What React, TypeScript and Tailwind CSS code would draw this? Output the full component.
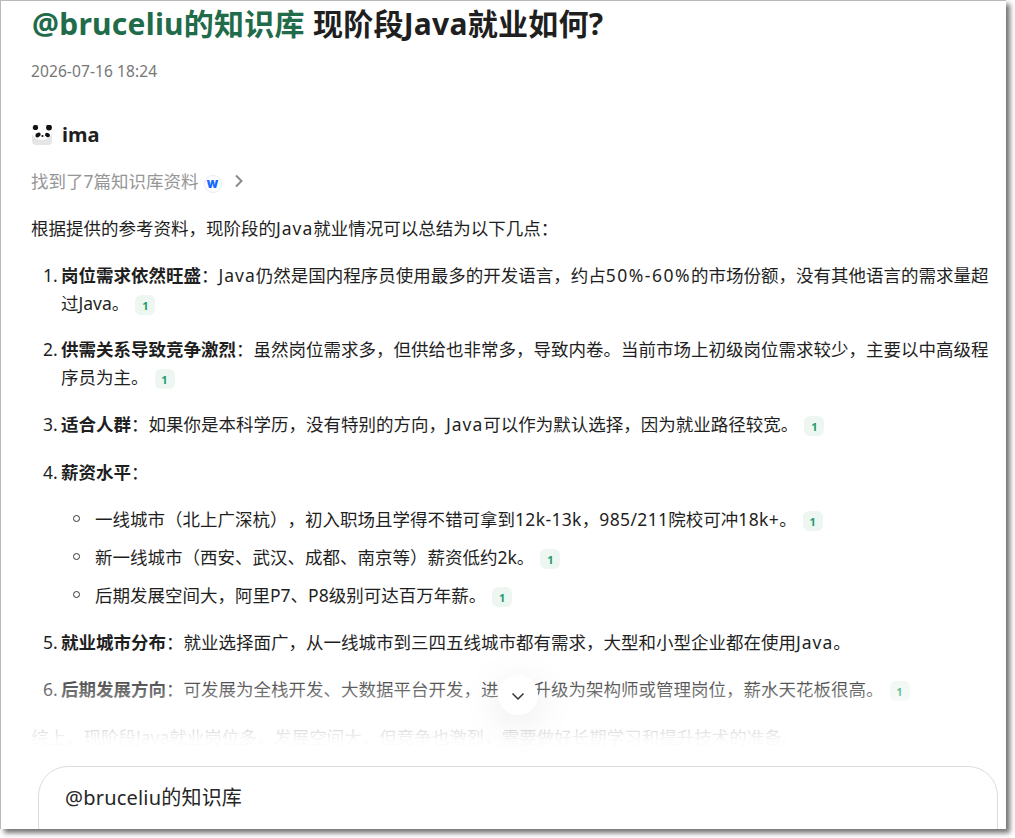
import React from 'react'

const Ref = () => (
  <span className="ml-[6px] inline-flex h-[20px] w-[20px] items-center justify-center rounded-[6px] bg-[#edf6f1] align-middle text-[11px] font-bold leading-none text-[#1f9d6b]">
    1
  </span>
)

const Java = () => <span className="tracking-[1px]">Java</span>

const Num = ({ children }: { children: React.ReactNode }) => (
  <span className="tracking-[0.35px]">{children}</span>
)

const Panda = () => (
  <svg width="20" height="20" viewBox="0 0 20 20" className="shrink-0">
    <rect x="0" y="0" width="20" height="20" rx="4" fill="#e6e6e6" />
    <ellipse cx="10" cy="7.5" rx="10" ry="7.5" fill="#fff" />
    <circle cx="3.5" cy="2.5" r="2.6" fill="#111" />
    <circle cx="17" cy="2.5" r="2.9" fill="#111" />
    <ellipse cx="6" cy="10" rx="2.8" ry="2.1" fill="#111" transform="rotate(-30 6 10)" />
    <ellipse cx="15.5" cy="10" rx="2.6" ry="2.1" fill="#111" transform="rotate(30 15.5 10)" />
    <ellipse cx="10.5" cy="11" rx="1.1" ry="0.9" fill="#111" />
  </svg>
)

const WordIcon = () => (
  <span className="inline-flex h-[18px] w-[18px] items-center justify-center rounded-full border border-[#e8ecf5] bg-white font-['Inter',sans-serif] text-[11px] font-black leading-none text-[#1668ff]">
    W
  </span>
)

const Bullet = () => (
  <span className="ml-[12px] mr-[15px] mt-[10px] h-[7px] w-[7px] shrink-0 rounded-full border border-[#333]" />
)

export default function App() {
  return (
    <div className="h-[838px] w-[1015px] overflow-hidden bg-white font-['Noto_Sans','Noto_Sans_CJK_SC',sans-serif] text-[#1f1f1f] [text-spacing-trim:space-all]">
      <div className="relative h-[829px] w-[1006px] overflow-hidden border-l border-t border-[#b9b9b9] bg-white shadow-[4px_4px_5px_rgba(0,0,0,0.55)]">
        <div className="pl-[30px] pr-[12px]">
          <h1 className="mt-[-2px] pl-[1px] text-[30px] font-bold leading-[50px] tracking-[0.25px]">
            <span className="text-[#1f6b4a]">@bruceliu的知识库</span> 现阶段Java就业如何?
          </h1>
          <p className="mt-[10px] text-[15.5px] leading-[24px] tracking-[0.1px] text-[#777]">2026-07-16 18:24</p>

          <div className="mt-[39px] flex h-[26px] items-center gap-[10px] pl-[1px] text-[20px] font-bold">
            <Panda />
            <span>ima</span>
          </div>

          <div className="mt-[20px] flex h-[26px] items-center text-[17.5px] text-[#969696]">
            <span>找到了7篇知识库资料</span>
            <span className="ml-[5px]"><WordIcon /></span>
            <svg width="12" height="14" viewBox="0 0 12 14" className="ml-[11px]" fill="none" stroke="#8a8a8a" strokeWidth="2">
              <path d="M3 1.5 8.5 7 3 12.5" />
            </svg>
          </div>

          <p className="mt-[20px] text-[17.5px] leading-[28px]">根据提供的参考资料，现阶段的<Java />就业情况可以总结为以下几点：</p>

          <ol className="mt-[19px] text-[17.5px] leading-[28px]">
            <li className="flex">
              <span className="w-[30px] shrink-0 pl-[12px]">1.</span>
              <span><b>岗位需求依然旺盛</b>：<Java />仍然是国内程序员使用最多的开发语言，约占<span className="tracking-[1.5px]">50%-60%</span>的市场份额，没有其他语言的需求量超过Java。<Ref /></span>
            </li>
            <li className="mt-[18px] flex">
              <span className="w-[30px] shrink-0 pl-[12px]">2.</span>
              <span><b>供需关系导致竞争激烈</b>：虽然岗位需求多，但供给也非常多，导致内卷。当前市场上初级岗位需求较少，主要以中高级程序员为主。<Ref /></span>
            </li>
            <li className="mt-[19px] flex">
              <span className="w-[30px] shrink-0 pl-[12px]">3.</span>
              <span><b>适合人群</b>：如果你是本科学历，没有特别的方向，<Java />可以作为默认选择，因为就业路径较宽。<Ref /></span>
            </li>
            <li className="mt-[20px] flex">
              <span className="w-[30px] shrink-0 pl-[12px]">4.</span>
              <div className="flex-1">
                <p><b>薪资水平</b>：</p>
                <ul className="mt-[19px] flex flex-col gap-[10px]">
                  <li className="flex">
                    <Bullet />
                    <span>一线城市（北上广深杭），初入职场且学得不错可拿到<Num>12k-13k</Num>，<Num>985/211</Num>院校可冲<Num>18k+</Num>。<Ref /></span>
                  </li>
                  <li className="flex">
                    <Bullet />
                    <span>新一线城市（西安、武汉、成都、南京等）薪资低约2k。<Ref /></span>
                  </li>
                  <li className="flex">
                    <Bullet />
                    <span>后期发展空间大，阿里P7、P8级别可达百万年薪。<Ref /></span>
                  </li>
                </ul>
              </div>
            </li>
            <li className="mt-[19px] flex">
              <span className="w-[30px] shrink-0 pl-[12px]">5.</span>
              <span><b>就业城市分布</b>：就业选择面广，从一线城市到三四五线城市都有需求，大型和小型企业都在使用<Java />。</span>
            </li>
            <li className="mt-[19px] flex">
              <span className="w-[30px] shrink-0 pl-[12px]">6.</span>
              <span><b>后期发展方向</b>：可发展为全栈开发、大数据平台开发，进一步升级为架构师或管理岗位，薪水天花板很高。<Ref /></span>
            </li>
          </ol>

          <p className="mt-[20px] text-[17.5px] leading-[28px]">综上，现阶段Java就业岗位多，发展空间大，但竞争也激烈，需要做好长期学习和提升技术的准备。</p>
        </div>

        {/* fade over the text above the input */}
        <div className="pointer-events-none absolute inset-x-0 bottom-0 h-[164px] bg-gradient-to-b from-[rgba(255,255,255,0)] via-[rgba(255,255,255,0.98)] via-[46%] to-white" />

        <button className="absolute left-[497px] top-[674px] flex h-[40px] w-[40px] items-center justify-center rounded-full bg-white shadow-[0_8px_40px_rgba(0,0,0,0.1)]">
          <svg width="16" height="16" viewBox="0 0 16 16" fill="none" stroke="#333" strokeWidth="1.5" className="mt-[1px]">
            <path d="M2.5 5.5 8 11 13.5 5.5" />
          </svg>
        </button>

        <div className="absolute left-[37px] top-[765px] h-[90px] w-[960px] rounded-[30px] border border-[#dcdcdc] bg-white pl-[26px] pt-[17px] text-[20px] leading-[28px] tracking-[0.2px] text-[#262626]">
          @bruceliu的知识库
        </div>
      </div>
    </div>
  )
}
